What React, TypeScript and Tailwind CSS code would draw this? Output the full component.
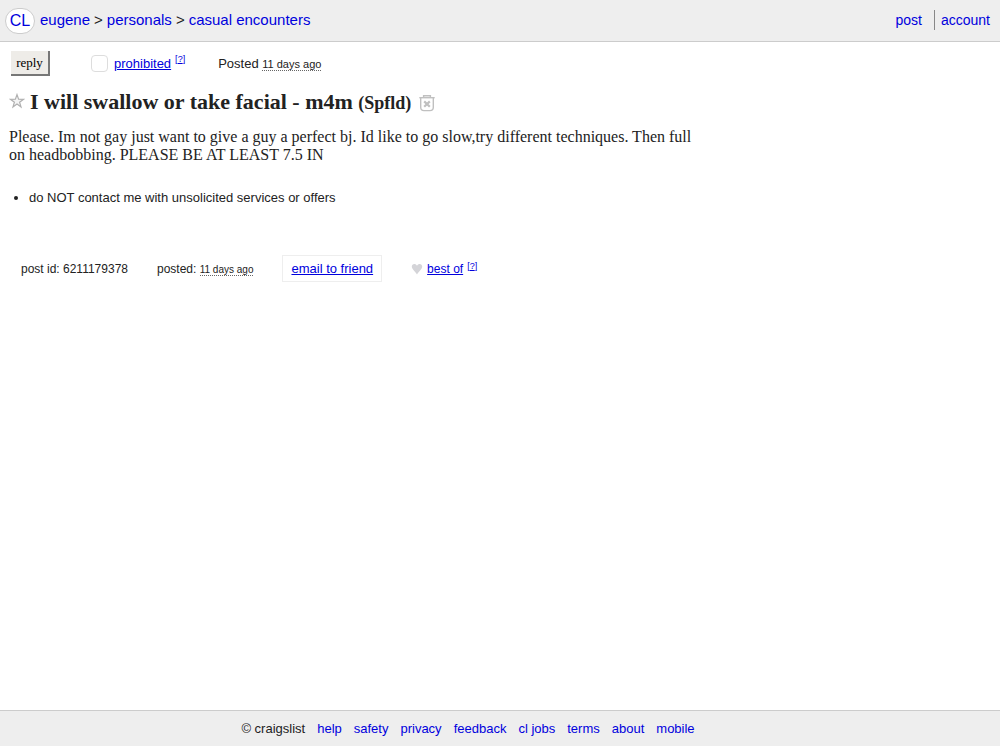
import React from "react";

const footerLinks = ["help", "safety", "privacy", "feedback", "cl jobs", "terms", "about", "mobile"];

const StarIcon = () => (
  <svg width="16" height="16" viewBox="0 0 16 16" fill="#f4f4f4" stroke="#b0b0b0" strokeWidth="1.2" strokeLinejoin="miter">
    <path d="M8 1.6 L9.6 6.2 L14.5 6.3 L10.6 9.2 L12 13.9 L8 11.1 L4 13.9 L5.4 9.2 L1.5 6.3 L6.4 6.2 Z" />
  </svg>
);

const TrashIcon = () => (
  <svg width="16" height="18" viewBox="0 0 16 18" fill="none" stroke="#c0c0c0" strokeWidth="1.4">
    <path d="M0.3 3.7 H15.7" />
    <path d="M4.6 3.4 V1.7 H11.4 V3.4" />
    <path d="M1.7 3.8 V13.2 Q1.7 16.6 5 16.6 H11 Q14.3 16.6 14.3 13.2 V3.8" />
    <path d="M5.2 7.4 L10.8 12.8 M10.8 7.4 L5.2 12.8" strokeWidth="2.2" />
  </svg>
);

const HeartIcon = () => (
  <svg width="12" height="12" viewBox="0 0 12 12" fill="#d4d4d8">
    <path d="M6 11.6 C4.6 8.6 0.8 6.4 0.8 3.4 C0.8 0.4 4.8 0 6 2.8 C7.2 0 11.2 0.4 11.2 3.4 C11.2 6.4 7.4 8.6 6 11.6 Z" />
  </svg>
);

const Help = () => (
  <a href="#help" className="ml-1 self-start text-[9px] leading-[10px]">
    [<span className="underline">?</span>]
  </a>
);

const Header = () => (
  <header className="flex h-[42px] items-center justify-between border-b border-[#cccccc] bg-[#eeeeee] pr-[10px] pl-[5px] text-[15px] text-[#0000dd]">
    <nav className="flex items-center gap-1">
      <a
        href="#home"
        className="mr-px flex h-[26px] w-[30px] items-center justify-center rounded-full border border-[#cccccc] bg-white text-base"
      >
        CL
      </a>
      <a href="#eugene">eugene</a>
      <span className="text-[#222222]">&gt;</span>
      <a href="#personals">personals</a>
      <span className="text-[#222222]">&gt;</span>
      <a href="#casual">casual encounters</a>
    </nav>
    <div className="flex items-center pb-px text-sm">
      <a href="#post" className="pr-3">post</a>
      <a href="#account" className="border-l border-[#888888] pl-[6px]">account</a>
    </div>
  </header>
);

const Footer = () => (
  <footer className="flex h-9 items-center justify-center gap-3 border-t border-[#cccccc] bg-[#eeeeee] pr-16 text-[13px]">
    <span>© craigslist</span>
    {footerLinks.map((link) => (
      <a key={link} href={"#" + link.replace(" ", "-")} className="text-[#0000dd]">
        {link}
      </a>
    ))}
  </footer>
);

const App = () => {
  return (
    <div className="flex min-h-screen flex-col bg-white font-['Liberation_Sans',Arial,sans-serif] text-[#222222]">
      <Header />

      <main className="flex-1 px-[9px]">
        <div className="flex h-[43px] items-center pl-[2px] text-[13px]">
          <button
            type="button"
            className="h-[25px] w-[39px] border-r-2 border-b-2 border-[#777777] bg-[#eeece8] font-['Liberation_Serif',serif] text-[13px] text-black"
          >
            reply
          </button>
          <div className="ml-[41px] flex items-center text-[#0000dd]">
            <input
              type="checkbox"
              id="prohibited"
              aria-label="prohibited"
              className="mr-[6px] size-[17px] appearance-none rounded-[4px] border border-[#dddddd] bg-white"
            />
            <a href="#prohibited" className="underline">prohibited</a>
            <Help />
          </div>
          <p className="ml-[33px]">
            Posted{" "}
            <time className="border-b border-dotted border-[#666666] text-[11px] leading-3">11 days ago</time>
          </p>
        </div>

        <h2 className="flex h-8 items-center font-['Liberation_Serif','Times_New_Roman',serif] text-[22px] font-bold">
          <button type="button" aria-label="save" className="mr-[5px]">
            <StarIcon />
          </button>
          <span>
            I will swallow or take facial - m4m <small className="text-lg">(Spfld)</small>
          </span>
          <button type="button" aria-label="hide" className="ml-2 pt-1">
            <TrashIcon />
          </button>
        </h2>

        <section className="w-[70%] pt-[11px] font-['Liberation_Serif','Times_New_Roman',serif] text-base leading-[18px]">
          Please. Im not gay just want to give a guy a perfect bj. Id like to go slow,try different techniques. Then
          full on headbobbing. PLEASE BE AT LEAST 7.5 IN
        </section>

        <ul className="mt-6 list-disc pl-5 text-[13px] leading-5">
          <li>do NOT contact me with unsolicited services or offers</li>
        </ul>

        <div className="mt-[47px] flex items-center gap-[29px] pl-3 text-xs">
          <p>post id: 6211179378</p>
          <p>
            posted:{" "}
            <time className="border-b border-dotted border-[#666666] text-[10px] leading-3">11 days ago</time>
          </p>
          <a
            href="#email"
            className="flex h-[27px] items-center border border-[#eeeeee] px-2 text-[13px] text-[#0000dd] underline"
          >
            email to friend
          </a>
          <div className="flex items-center text-[#0000dd]">
            <HeartIcon />
            <a href="#best-of" className="ml-1 underline">best of</a>
            <Help />
          </div>
        </div>
      </main>

      <Footer />
    </div>
  );
};

export default App;
